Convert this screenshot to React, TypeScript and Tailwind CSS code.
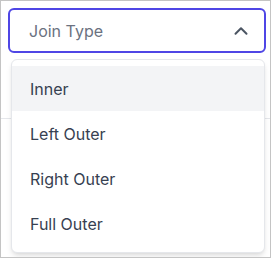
import { ChevronUp } from "lucide-react";

const options = ["Inner", "Left Outer", "Right Outer", "Full Outer"];

export default function App() {
	return (
		<div
			className="relative w-[271px] h-[258px] border border-[#c4c4c4] bg-white overflow-hidden"
			style={{ fontFamily: "Inter, 'Noto Sans', sans-serif" }}
		>
			<div className="pt-[7px] pl-[7px] pr-[4px]">
				<button className="flex w-full h-[45px] items-center justify-between rounded-md border-2 border-[#4f46e5] bg-white pl-[19px] pr-[12px] text-left">
					<span className="text-[16px] text-[#6b7280]">Join Type</span>
					<ChevronUp className="h-[22px] w-[22px] text-[#4b5563]" strokeWidth={2.2} />
				</button>
			</div>
			{/* content behind the menu */}
			<div className="mt-[65px] border-b border-[#e5e7eb]" />

			<ul className="absolute left-[10px] top-[58px] w-[254px] rounded-md border border-[#e5e7eb] bg-white py-[6px] shadow-md">
				{options.map((o, i) => (
					<li
						key={o}
						className={
							"flex h-[45px] items-center pl-[18px] text-[16px] text-[#374151] " +
							(i === 0 ? "bg-[#f3f4f6]" : "")
						}
					>
						{o}
					</li>
				))}
			</ul>
		</div>
	);
}
